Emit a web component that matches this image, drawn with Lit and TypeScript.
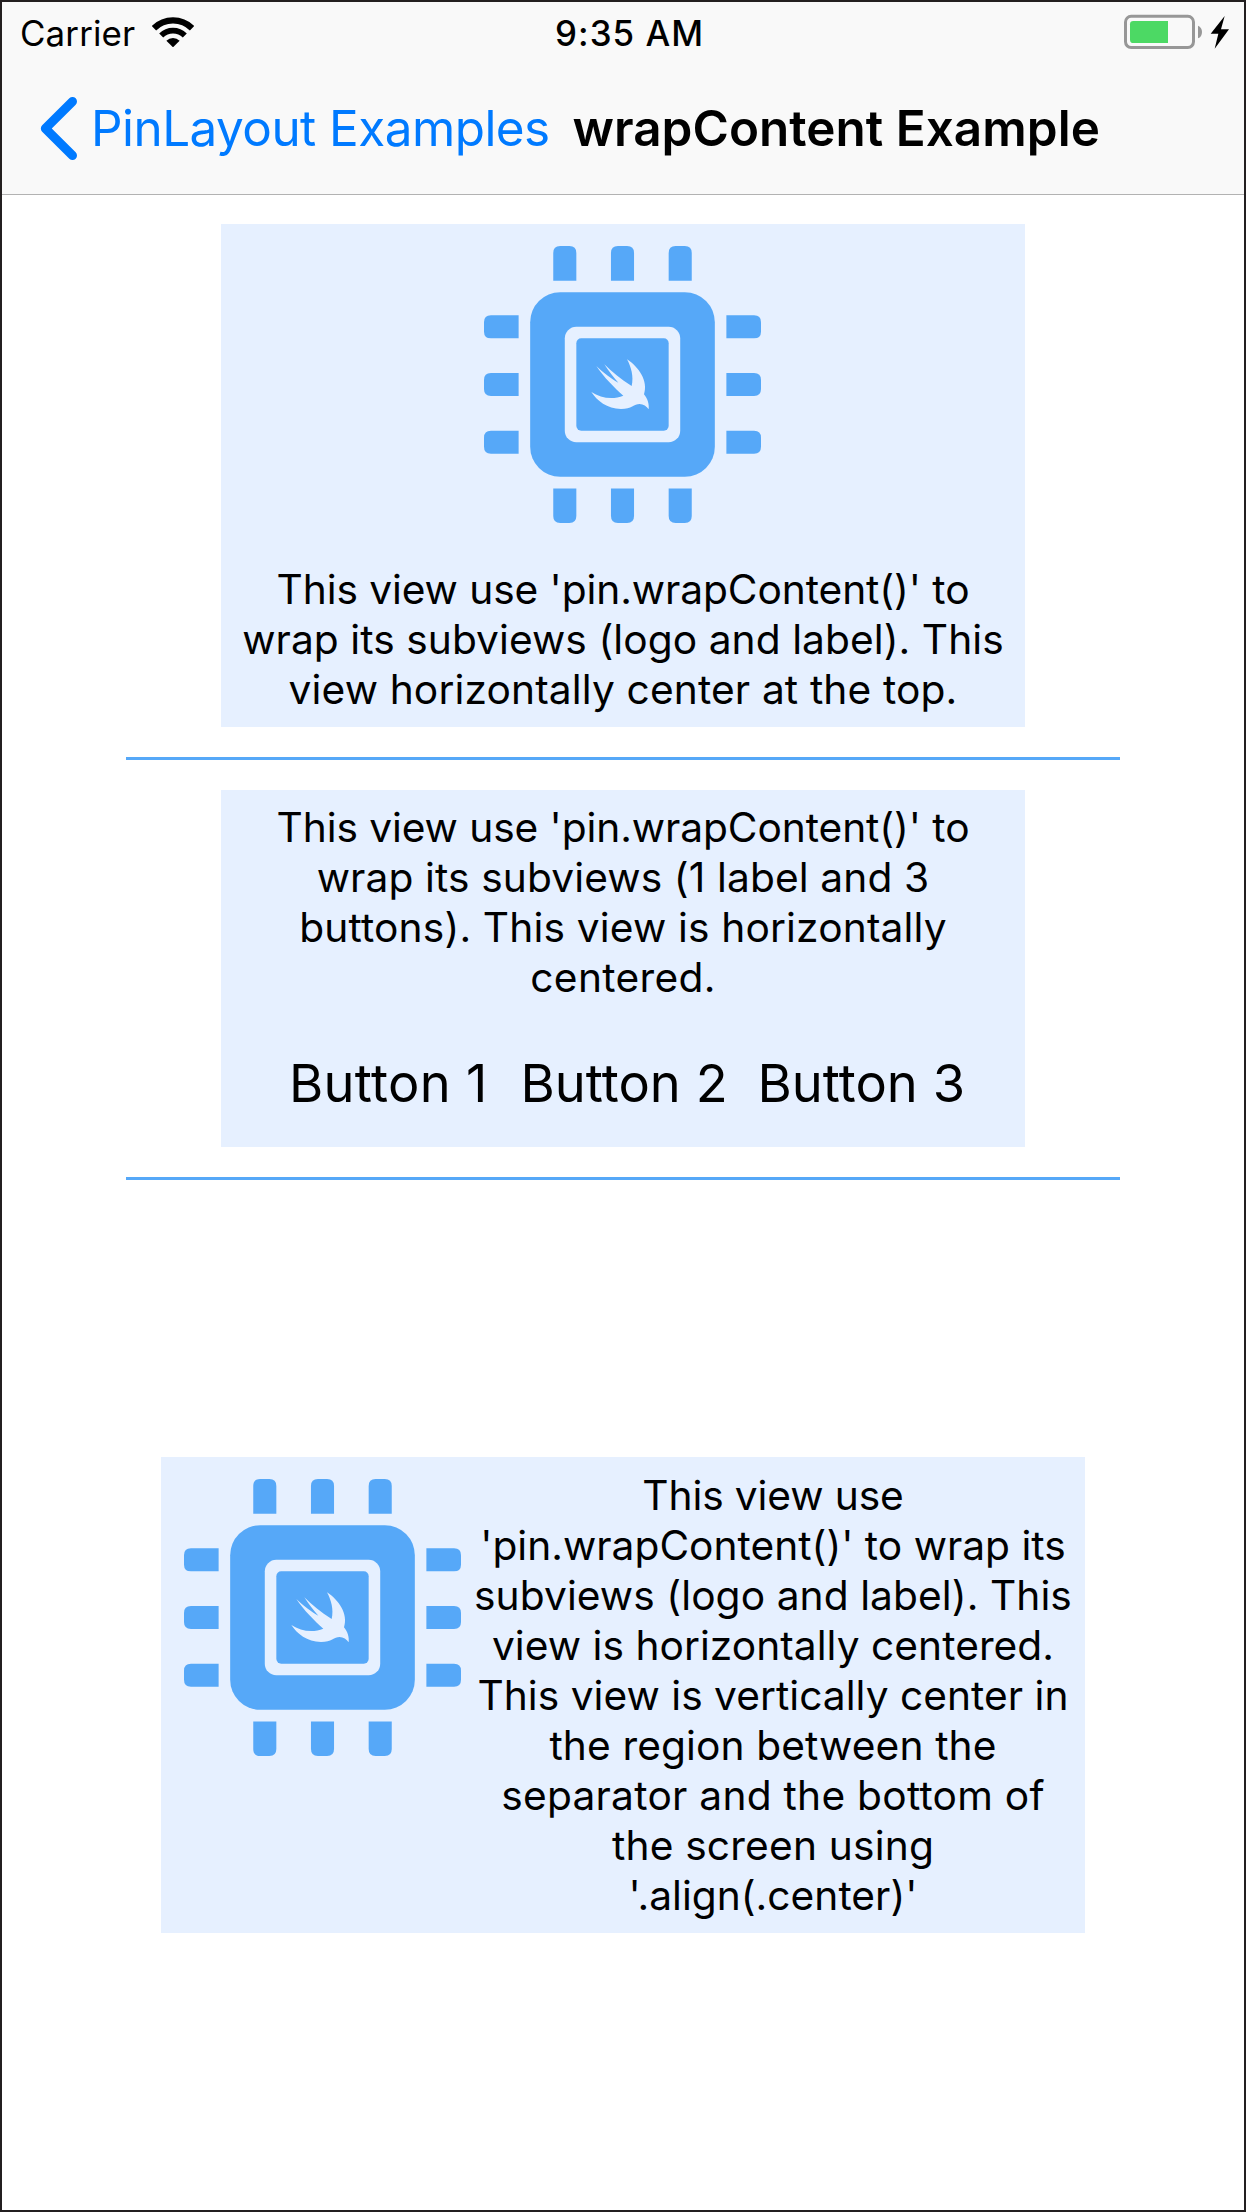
import { LitElement, html, css, svg } from "lit";
import { customElement, property } from "lit/decorators.js";

type Line = [text: string, tracking: number];

const TOP_LABEL: Line[] = [
  ["This view use 'pin.wrapContent()' to", -0.089],
  ["wrap its subviews (logo and label). This", 0.062],
  ["view horizontally center at the top.", 0.133],
];

const BUTTONS_LABEL: Line[] = [
  ["This view use 'pin.wrapContent()' to", -0.089],
  ["wrap its subviews (1 label and 3", 0.116],
  ["buttons). This view is horizontally", 0.157],
  ["centered.", 0.298],
];

const CENTER_LABEL: Line[] = [
  ["This view use", -0.115],
  ["'pin.wrapContent()' to wrap its", 0.003],
  ["subviews (logo and label). This", 0.074],
  ["view is horizontally centered.", 0.035],
  ["This view is vertically center in", 0.025],
  ["the region between the", 0.11],
  ["separator and the bottom of", 0.251],
  ["the screen using", 0.183],
  ["'.align(.center)'", 0.013],
];

@customElement("chip-logo")
class ChipLogo extends LitElement {
  static styles = css`
    :host {
      display: block;
      flex: none;
      width: 277px;
      height: 277px;
    }
    .chip {
      display: block;
      width: 100%;
      height: 100%;
      fill: #56a8f8;
    }
    .hole {
      fill: #e6f0ff;
    }
  `;

  render() {
    const pins = [6, 11, 16].map(
      (p) => svg`<path d="M${p} 3V.6q0-.6.6-.6h.8q.6 0 .6.6V3z"/>`
    );
    return html`
      <svg class="chip" viewBox="0 0 24 24">
        ${[0, 90, 180, 270].map(
          (a) => svg`<g transform="rotate(${a} 12 12)">${pins}</g>`
        )}
        <rect x="4" y="4" width="16" height="16" rx="2.6" />
        <rect class="hole" x="7" y="7" width="10" height="10" rx="1" />
        <rect x="8" y="8" width="8" height="8" rx=".42" />
        <path
          class="hole"
          transform="scale(.02888) translate(288 297)"
          d="M141 43C175 65 206 108 192 148C203 161 208 178 206 193C200 184 190 177 179 177C162 177 155 192 123 192C82 192 50 166 34 141C62 160 100 165 130 152C105 130 70 95 49 63C70 83 95 102 115 113C101 97 86 79 73 58C95 80 122 103 155 123C162 95 153 65 141 43Z"
        />
      </svg>
    `;
  }
}

@customElement("text-label")
class TextLabel extends LitElement {
  static styles = css`
    :host {
      display: block;
      font-size: 40.7px;
      line-height: 50px;
      text-align: center;
      white-space: nowrap;
    }
    .line {
      height: 50px;
    }
  `;

  @property({ attribute: false }) lines: Line[] = [];

  render() {
    return this.lines.map(
      ([text, tracking]) =>
        html`<div class="line" style="letter-spacing:${tracking}px">${text}</div>`
    );
  }
}

@customElement("app-root")
class AppRoot extends LitElement {
  static styles = css`
    :host {
      display: block;
      font-family: Inter, "Liberation Sans", sans-serif;
      color: #000;
    }
    .screen {
      box-sizing: border-box;
      height: 2212px;
      width: 1246px;
      border: 2px solid #231f20;
      background: #fff;
      display: flex;
      flex-direction: column;
      align-items: center;
    }
    .header {
      box-sizing: border-box;
      width: 100%;
      height: 193px;
      background: #f9f9f9;
      border-bottom: 1px solid #b2b2b2;
      white-space: nowrap;
    }
    .status {
      display: grid;
      grid-template-columns: 535px 1fr 106px;
      padding: 10px 14px 0 18px;
      font-size: 34.9px;
      line-height: 42px;
    }
    .carrier {
      display: flex;
      align-items: flex-start;
      gap: 16.8px;
      letter-spacing: 0.13px;
    }
    .wifi {
      width: 42px;
      height: 30px;
      margin-top: 4.7px;
    }
    .time {
      font-weight: 500;
      letter-spacing: 1.044px;
    }
    .battery {
      width: 106px;
      height: 35px;
      margin-top: 2px;
    }
    .nav {
      display: flex;
      padding: 44px 0 0 38px;
      font-size: 49.4px;
      line-height: 60px;
    }
    .chevron {
      width: 38px;
      height: 63px;
      margin: -1px 13px 0 0;
      flex: none;
    }
    .back {
      color: #007aff;
      letter-spacing: -0.52px;
      width: 481.5px;
    }
    .title {
      margin: 0;
      font-size: inherit;
      font-weight: 600;
      letter-spacing: 0.05px;
    }
    .card {
      box-sizing: border-box;
      background: #e6f0ff;
      flex: none;
    }
    .top {
      width: 804px;
      height: 503px;
      margin-top: 29px;
      padding-top: 22px;
      display: flex;
      flex-direction: column;
      gap: 42px;
    }
    .top chip-logo {
      margin-left: 263px;
    }
    .separator {
      flex: none;
      width: 994px;
      height: 3px;
      margin: 30px 0;
      background: #56a8f8;
    }
    .middle {
      width: 804px;
      height: 357px;
      padding-top: 13px;
    }
    .buttons {
      display: grid;
      grid-template-columns: 231.4px 237px auto;
      justify-content: start;
      margin: 48px 0 0 68px;
      font-size: 52.4px;
      line-height: 64px;
      white-space: nowrap;
    }
    .button {
      font: inherit;
      color: inherit;
      background: none;
      border: 0;
      padding: 0;
      text-align: left;
      letter-spacing: 0.06px;
    }
    .button:first-child {
      letter-spacing: 0.3px;
    }
    .region {
      flex: 1;
      margin-top: -30px;
      display: flex;
      align-items: center;
    }
    .bottom {
      width: 924px;
      height: 476px;
      padding: 0 12px 0 23px;
      display: flex;
      gap: 12px;
    }
    .bottom chip-logo {
      margin-top: 22px;
    }
    .bottom text-label {
      flex: 1;
      margin-top: 14px;
    }
  `;

  render() {
    return html`
      <main class="screen">
        <header class="header">
          <div class="status">
            <div class="carrier">
              <span>Carrier</span>
              <svg class="wifi" viewBox="456 50 126 90" fill="none" stroke="#000">
                <path stroke-width="19" d="M461.7 83.7A81 81 0 0 1 576.3 83.7" />
                <path stroke-width="17" d="M483.6 105.6A50 50 0 0 1 554.4 105.6" />
                <path
                  fill="#000"
                  stroke="none"
                  d="M519 141L499.2 121.2A28 28 0 0 1 538.8 121.2Z"
                />
              </svg>
            </div>
            <div class="time">9:35 AM</div>
            <svg class="battery" viewBox="912 42 318 105">
              <rect
                x="916.5"
                y="49"
                width="204"
                height="93.5"
                rx="17"
                fill="none"
                stroke="#979797"
                stroke-width="9"
              />
              <path fill="#4cd964" d="M1044 63V129H940Q930 129 930 119V73Q930 63 940 63Z" />
              <path fill="#979797" d="M1134 77C1150 82 1150 110 1134 115Z" />
              <path d="M1214 48L1172 101H1195L1184 146L1227 88H1203Z" />
            </svg>
          </div>
          <nav class="nav">
            <svg
              class="chevron"
              viewBox="120 291 114 189"
              fill="none"
              stroke="#007aff"
              stroke-width="27"
              stroke-linecap="round"
              stroke-linejoin="round"
            >
              <path d="M217.5 304.5L136 385.5L217.5 466.5" />
            </svg>
            <span class="back">PinLayout Examples</span>
            <h1 class="title">wrapContent Example</h1>
          </nav>
        </header>

        <section class="card top">
          <chip-logo></chip-logo>
          <text-label .lines=${TOP_LABEL}></text-label>
        </section>

        <div class="separator"></div>

        <section class="card middle">
          <text-label .lines=${BUTTONS_LABEL}></text-label>
          <div class="buttons">
            ${[1, 2, 3].map((n) => html`<button class="button">Button ${n}</button>`)}
          </div>
        </section>

        <div class="separator"></div>

        <div class="region">
          <section class="card bottom">
            <chip-logo></chip-logo>
            <text-label .lines=${CENTER_LABEL}></text-label>
          </section>
        </div>
      </main>
    `;
  }
}
